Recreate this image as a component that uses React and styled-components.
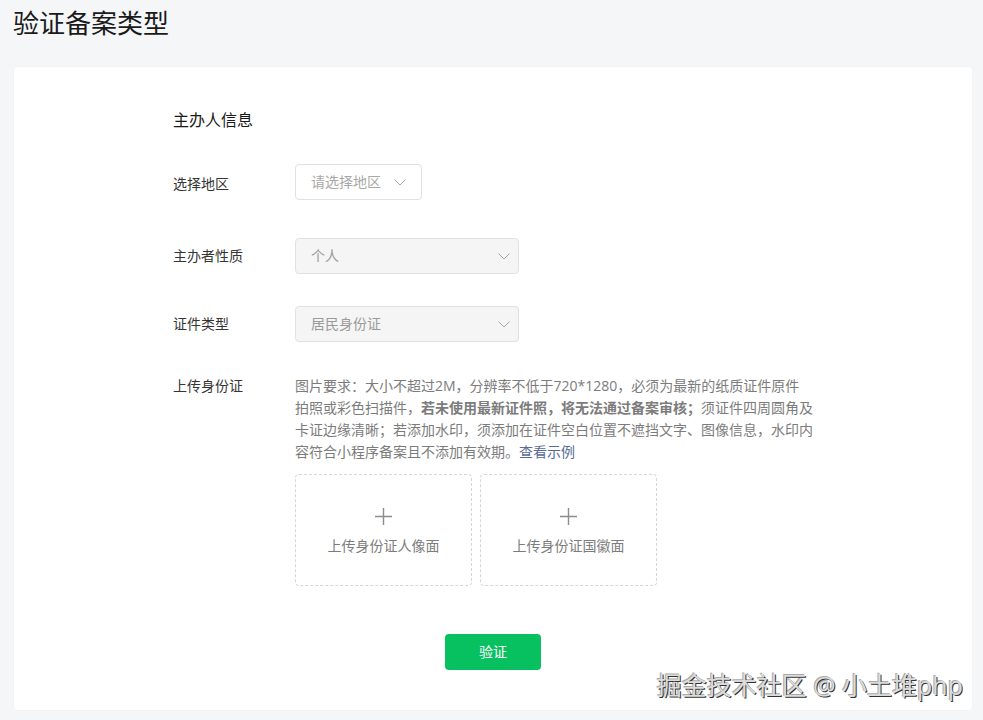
import React, { useState } from 'react'
import styled, { createGlobalStyle } from 'styled-components'


const GlobalStyle = createGlobalStyle`
	* {
		box-sizing: border-box;
	}

	body {
		margin: 0;
		background: #f5f6f8;
		color: #353535;
		font-family: 'Open Sans', 'Noto Sans CJK SC', sans-serif;
		font-size: 14px;
		line-height: 22px;
	}

	button, input, select {
		font: inherit;
	}
`;

const Page = styled.main`
	position: relative;
	min-height: 100vh;
	padding: 4px 10px 10px 13px;
`;

const PageTitle = styled.h1`
	margin: 0 0 24px;
	color: #1a1a1a;
	font-size: 26px;
	font-weight: 400;
	line-height: 38px;
`;

const Card = styled.form`
	padding: 41px 24px 40px;
	border: 1px solid #f2f3f5;
	border-radius: 4px;
	background: #fff;
`;

const FormBody = styled.div`
	display: flex;
	flex-direction: column;
	gap: 32px;
	max-width: 640px;
	margin: 0 auto;
`;

const SectionTitle = styled.h2`
	margin: 0;
	color: #1a1a1a;
	font-size: 16px;
	font-weight: 400;
	line-height: 24px;
`;

const Row = styled.div`
	display: grid;
	grid-template-columns: 122px 1fr;
	align-items: center;
`;

const RegionRow = styled(Row)`
	min-height: 42px;
	align-items: start;
`;

const UploadRow = styled(Row)`
	padding-top: 1px;
	align-items: start;
`;

const Label = styled.label`
	color: #353535;
	line-height: ${props => props.$tall ? '40px' : '22px'};
`;

const SelectBox = styled.div`
	position: relative;
	width: ${props => props.$small ? '127px' : '224px'};
	max-width: 100%;

	svg {
		position: absolute;
		top: 14px;
		right: ${props => props.$small ? '15px' : '8px'};
		pointer-events: none;
	}
`;

const StyledSelect = styled.select`
	display: block;
	width: 100%;
	height: 36px;
	padding: 0 32px 0 15px;
	border: 1px solid #e0e1e3;
	border-radius: 4px;
	background: #fff;
	color: #a8a8a8;
	appearance: none;
	outline: none;

	&:disabled {
		background: #f5f5f5;
		color: #9a9a9a;
		opacity: 1;
	}
`;

const Tips = styled.p`
	margin: 0 0 11px;
	color: #7c7c7c;
`;

const Link = styled.a`
	color: #576b95;
	text-decoration: none;
`;

const Uploads = styled.div`
	display: flex;
	flex-wrap: wrap;
	gap: 8px;
`;

const UploadBox = styled.label`
	display: flex;
	flex-direction: column;
	align-items: center;
	justify-content: center;
	gap: 10px;
	width: 177px;
	height: 112px;
	padding-top: 4px;
	border: 1px dashed #d6d6d6;
	border-radius: 4px;
	color: #7c7c7c;
	cursor: pointer;
`;

const FileInput = styled.input`
	position: absolute;
	width: 1px;
	height: 1px;
	overflow: hidden;
	clip-path: inset(50%);
`;

const Footer = styled.div`
	display: flex;
	justify-content: center;
	padding-top: 48px;
`;

const SubmitButton = styled.button`
	width: 96px;
	height: 36px;
	padding: 0;
	border: 0;
	border-radius: 4px;
	background: #07c160;
	color: #fff;
	cursor: pointer;
`;

const Watermark = styled.div`
	position: absolute;
	right: 20px;
	bottom: 18px;
	color: #dcdcdc;
	font-size: 25px;
	line-height: 36px;
	text-shadow: 1px 1px 0 #333, -1px -1px 0 #aaa;
	white-space: nowrap;
	pointer-events: none;
`;

function Chevron() {
	return (
		<svg width="14" height="8" viewBox="0 0 14 8" fill="none" stroke="#a8a8a8">
			<path d="M1.5 1.5 L7 7 L12.5 1.5" />
		</svg>
	);
}

function Select({ small, children, ...props }) {
	return (
		<SelectBox $small={small}>
			<StyledSelect {...props}>{children}</StyledSelect>
			<Chevron />
		</SelectBox>
	);
}

function Upload({ name, text }) {
	return (
		<UploadBox>
			<svg width="17" height="17" viewBox="0 0 17 17" fill="#8c8c8c">
				<path d="M7.8 0h1.4v7.8h7.8v1.4h-7.8v7.8h-1.4v-7.8h-7.8v-1.4h7.8z" />
			</svg>
			{text}
			<FileInput type="file" name={name} accept="image/*" />
		</UploadBox>
	);
}

export default function App() {
	const [region, setRegion] = useState('');

	return (
		<Page>
			<GlobalStyle />
			<PageTitle>验证备案类型</PageTitle>
			<Card onSubmit={e => e.preventDefault()}>
				<FormBody>
					<SectionTitle>主办人信息</SectionTitle>
					<RegionRow>
						<Label $tall htmlFor="region">选择地区</Label>
						<Select small id="region" value={region} onChange={e => setRegion(e.target.value)}>
							<option value="">请选择地区</option>
						</Select>
					</RegionRow>
					<Row>
						<Label htmlFor="nature">主办者性质</Label>
						<Select id="nature" disabled>
							<option>个人</option>
						</Select>
					</Row>
					<Row>
						<Label htmlFor="idType">证件类型</Label>
						<Select id="idType" disabled>
							<option>居民身份证</option>
						</Select>
					</Row>
					<UploadRow>
						<Label as="span" id="uploadLabel">上传身份证</Label>
						<div role="group" aria-labelledby="uploadLabel">
							<Tips>
								图片要求：大小不超过2M，分辨率不低于720*1280，必须为最新的纸质证件原件拍照或彩色扫描件，<b>若未使用最新证件照，将无法通过备案审核；</b>须证件四周圆角及卡证边缘清晰；若添加水印，须添加在证件空白位置不遮挡文字、图像信息，水印内容符合小程序备案且不添加有效期。<Link href="#example">查看示例</Link>
							</Tips>
							<Uploads>
								<Upload name="front" text="上传身份证人像面" />
								<Upload name="back" text="上传身份证国徽面" />
							</Uploads>
						</div>
					</UploadRow>
				</FormBody>
				<Footer>
					<SubmitButton type="submit">验证</SubmitButton>
				</Footer>
			</Card>
			<Watermark>掘金技术社区 @ 小土堆php</Watermark>
		</Page>
	);
}
